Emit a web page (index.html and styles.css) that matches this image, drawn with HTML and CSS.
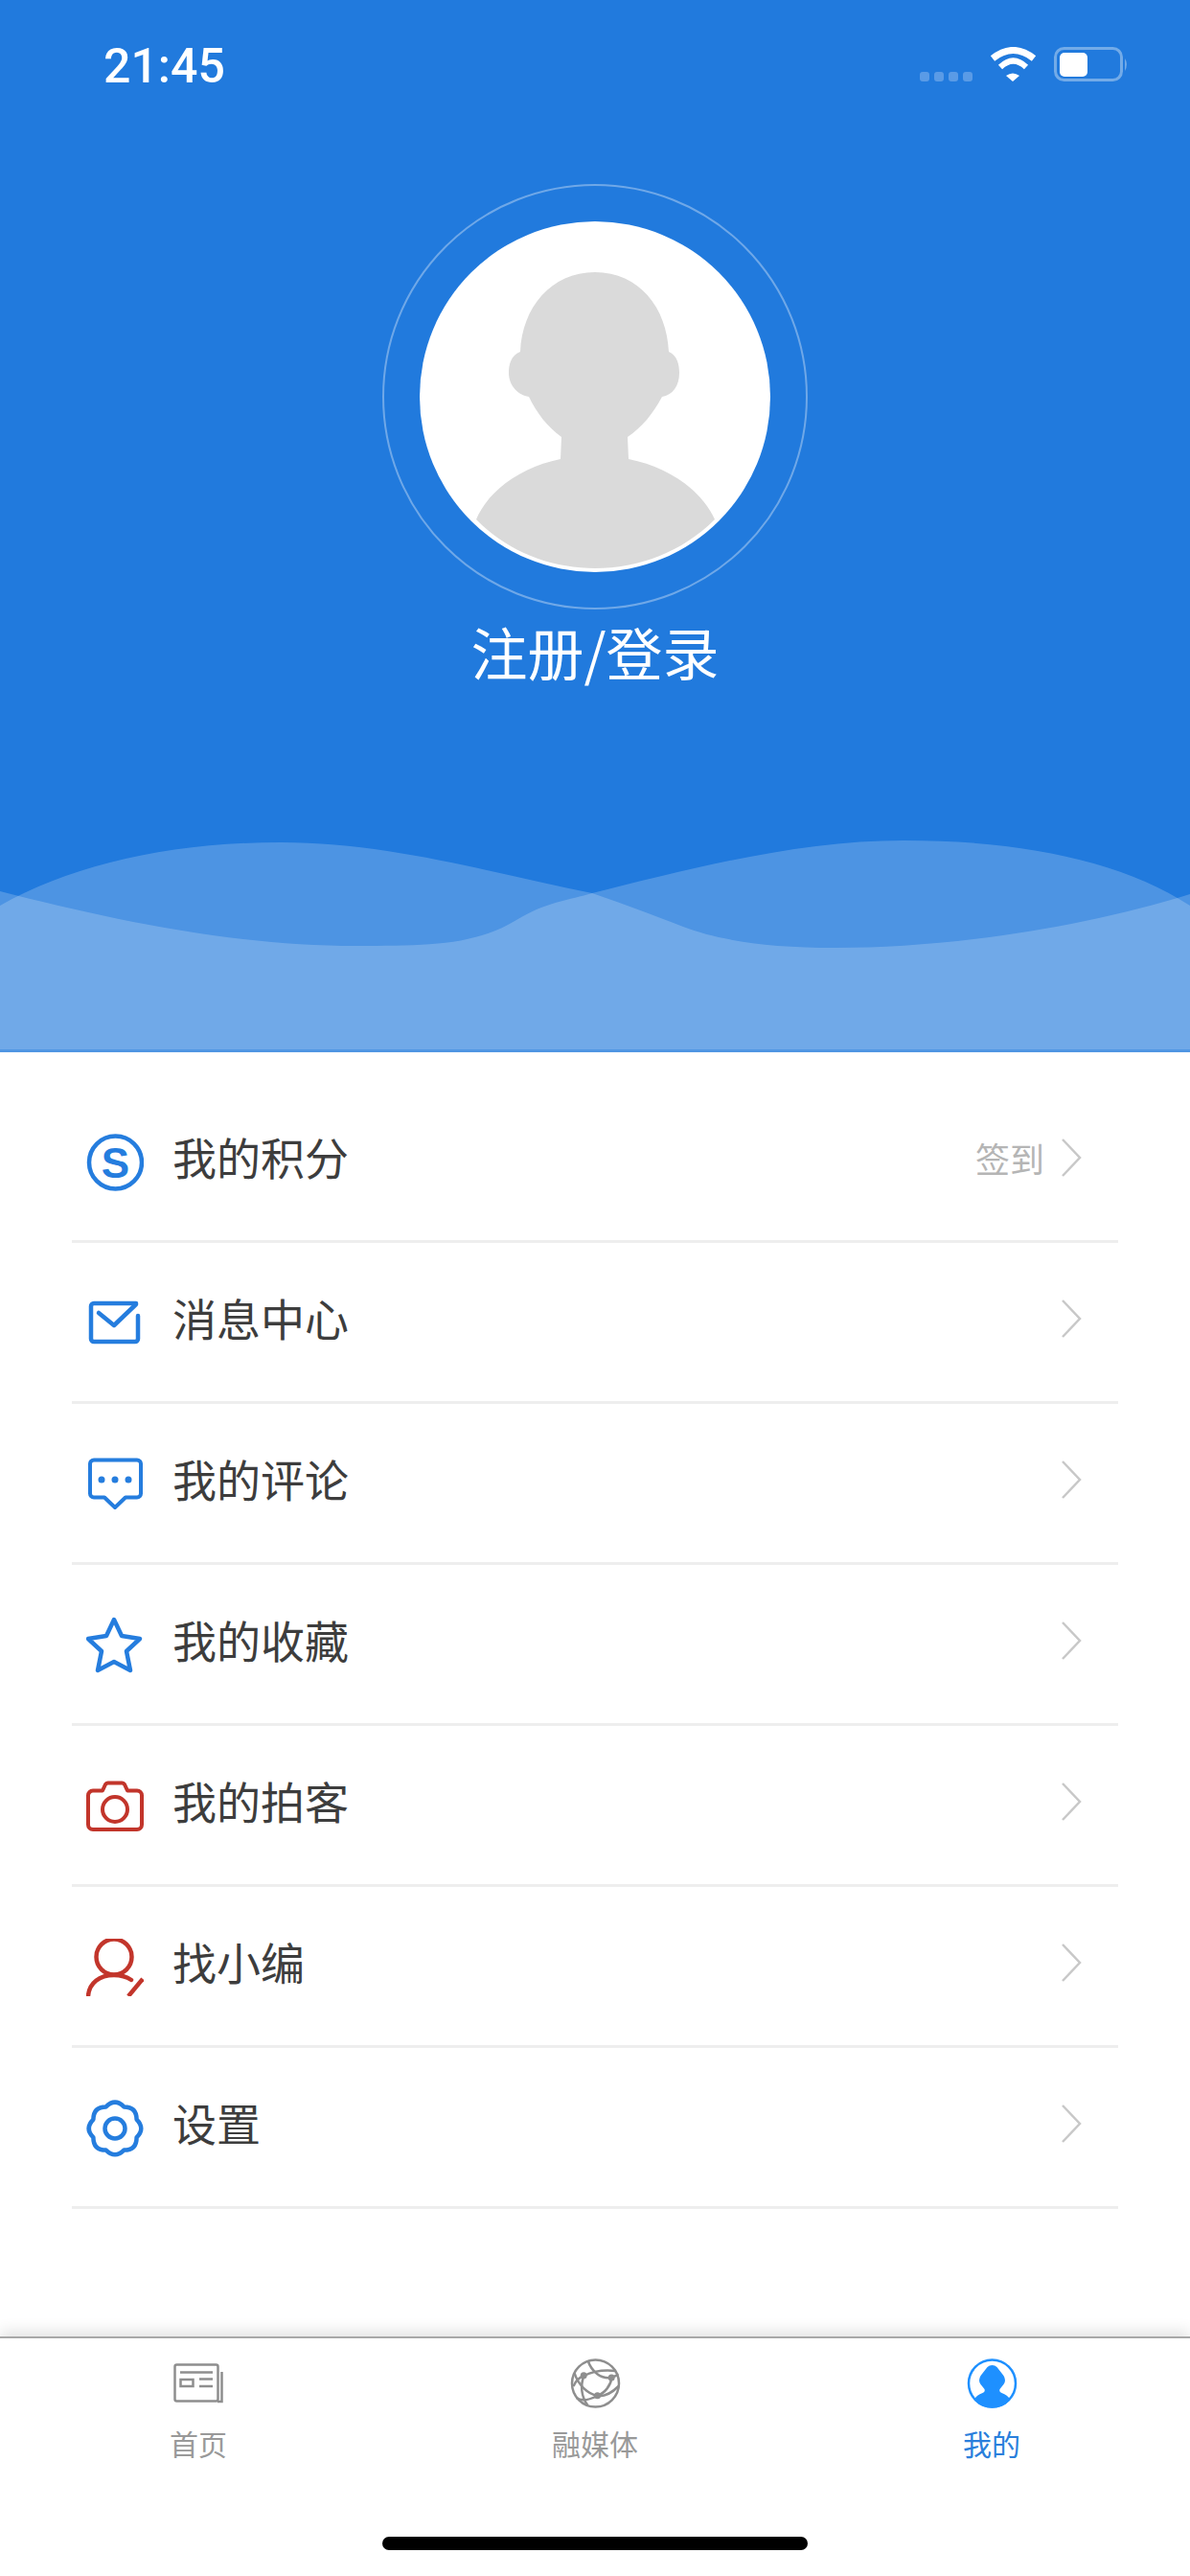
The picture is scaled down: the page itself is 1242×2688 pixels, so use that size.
FILE: index.html
```html
<!DOCTYPE html>
<html>
<head>
  <meta charset="utf-8">
  <title>我的</title>
  <link rel="stylesheet" href="styles.css">
</head>
<body>
  <div class="hero">
    <svg class="waves" viewBox="0 0 1242 230" preserveAspectRatio="none">
      <path class="wave" d="M0 77C75 35 175 11 293 11C410 11 520 45 618 64C715 40 830 9 943 9C1065 9 1170 30 1242 77V230H0Z"/>
      <path class="wave" d="M0 62C110 90 240 119 372 119C445 119 495 119 539 92C570 73 595 71 618 64C650 75 685 88 713 99C750 113 800 121 872 121C990 121 1130 100 1242 65V230H0Z"/>
      <rect class="wave-edge" x="0" y="227" width="1242" height="3"/>
    </svg>

    <div class="status">
      <span class="time">21:45</span>
      <svg class="status-icons" width="219" height="36" viewBox="0 0 219 36">
        <g fill="#5a9be6">
          <rect x="0" y="26" width="10" height="10" rx="3"/>
          <rect x="15" y="26" width="10" height="10" rx="3"/>
          <rect x="30" y="26" width="10" height="10" rx="3"/>
          <rect x="45" y="26" width="10" height="10" rx="3"/>
        </g>
        <g fill="none" stroke="#fff">
          <path stroke-width="7" d="M76 12Q97.5 -5 119 12"/>
          <path stroke-width="6" d="M84 21Q97.5 8 111 21"/>
        </g>
        <path fill="#fff" d="M90 30Q97 25 104 30L97 36Z"/>
        <rect x="141.5" y="1.5" width="69" height="33" rx="9" fill="none" stroke="#73abe8" stroke-width="3"/>
        <rect x="146" y="6" width="29" height="25" rx="5" fill="#fff"/>
        <path fill="#73abe8" d="M214 12Q218 18 214 25Z"/>
      </svg>
    </div>

    <div class="ring">
      <div class="avatar">
        <svg width="366" height="366" viewBox="438 230 366 366">
          <path fill="#dadada" d="M621 283C575 283 545 320 543 366C533 370 531 380 531 388C531 402 541 411 552 413C560 430 572 445 586 455L585 478C545 486 510 510 497 541C530 575 575 592 621 592C667 592 712 575 746 541C732 510 697 486 656 478L655 455C670 445 682 430 691 413C702 411 709 402 709 388C709 380 707 370 698 366C696 320 667 283 621 283Z"/>
        </svg>
      </div>
    </div>
    <div class="login">注册/登录</div>
  </div>

  <div class="menu">
    <div class="row">
      <svg class="icon" viewBox="0 0 60 60">
        <circle class="ln" cx="30.5" cy="30" r="27.5"/>
        <text class="s-mark" x="30.5" y="46">S</text>
      </svg>
      <span class="label">我的积分</span>
      <span class="extra">签到</span>
      <svg class="arrow" viewBox="0 0 22 40"><path d="M2 1L20 20L2 39"/></svg>
    </div>
    <div class="row">
      <svg class="icon" viewBox="0 0 60 60">
        <path class="ln" stroke-linecap="round" d="M52 9H8A3 3 0 0 0 5 12V46A3 3 0 0 0 8 49H51A3 3 0 0 0 54 46V22"/>
        <path class="ln" stroke-linecap="round" stroke-linejoin="round" d="M13 19L29 32L52 10"/>
      </svg>
      <span class="label">消息中心</span>
      <svg class="arrow" viewBox="0 0 22 40"><path d="M2 1L20 20L2 39"/></svg>
    </div>
    <div class="row">
      <svg class="icon" viewBox="0 0 60 60">
        <path class="ln thin" stroke-linejoin="round" d="M8 4.5H53A4 4 0 0 1 57 8.5V39.5A4 4 0 0 1 53 43.5H41L30 54L19 43.5H8A4 4 0 0 1 4 39.5V8.5A4 4 0 0 1 8 4.5Z"/>
        <circle class="dot" cx="16" cy="25" r="3.5"/>
        <circle class="dot" cx="30" cy="25" r="3.5"/>
        <circle class="dot" cx="44" cy="25" r="3.5"/>
      </svg>
      <span class="label">我的评论</span>
      <svg class="arrow" viewBox="0 0 22 40"><path d="M2 1L20 20L2 39"/></svg>
    </div>
    <div class="row">
      <svg class="icon" viewBox="0 0 60 60">
        <path class="ln" stroke-linejoin="round" d="M29 3L37 20L56 23L42 36L46 56L29 47L12 56L16 36L2 23L21 20Z"/>
      </svg>
      <span class="label">我的收藏</span>
      <svg class="arrow" viewBox="0 0 22 40"><path d="M2 1L20 20L2 39"/></svg>
    </div>
    <div class="row">
      <svg class="icon" viewBox="0 0 60 60">
        <path class="ln red thin" stroke-linejoin="round" d="M7 13.5H17L20 7A3 3 0 0 1 23 5.5H37A3 3 0 0 1 40 7L43 13.5H53A5 5 0 0 1 58 18.5V49A5 5 0 0 1 53 54H7A5 5 0 0 1 2 49V18.5A5 5 0 0 1 7 13.5Z"/>
        <circle class="ln red thin" cx="30" cy="33" r="13"/>
      </svg>
      <span class="label">我的拍客</span>
      <svg class="arrow" viewBox="0 0 22 40"><path d="M2 1L20 20L2 39"/></svg>
    </div>
    <div class="row">
      <svg class="icon" viewBox="0 0 60 60">
        <circle class="ln red" cx="29" cy="19" r="18.5"/>
        <path class="ln red" stroke-linecap="round" d="M2 60C3 46 14 38 29 38C35 38 41 39 47 43"/>
        <path class="ln red" d="M59 42L44 60"/>
      </svg>
      <span class="label">找小编</span>
      <svg class="arrow" viewBox="0 0 22 40"><path d="M2 1L20 20L2 39"/></svg>
    </div>
    <div class="row">
      <svg class="icon" viewBox="0 0 60 60">
        <path class="ln" stroke-linejoin="round" d="M39.4 7.4Q52.6 7.4 52.6 20.6Q62 30 52.6 39.4Q52.6 52.6 39.4 52.6Q30 62 20.6 52.6Q7.4 52.6 7.4 39.4Q-2 30 7.4 20.6Q7.4 7.4 20.6 7.4Q30 -2 39.4 7.4Z"/>
        <circle class="ln" cx="30" cy="30" r="10.5"/>
      </svg>
      <span class="label">设置</span>
      <svg class="arrow" viewBox="0 0 22 40"><path d="M2 1L20 20L2 39"/></svg>
    </div>
  </div>

  <div class="tabbar">
    <div class="tabs">
      <div class="tab">
        <svg class="tab-icon" viewBox="0 -5 53 52">
          <rect x="1.5" y="1.5" width="45" height="38" rx="2"/>
          <path d="M7 9.5H41M27 16.5H41M27 24H41M50.5 9V40H46"/>
          <rect x="7.5" y="17" width="13" height="7"/>
        </svg>
        <span>首页</span>
      </div>
      <div class="tab">
        <svg class="tab-icon" viewBox="-26.5 -26 53 52">
          <circle cx="0" cy="0" r="24.5"/>
          <path d="M-8 -24C-4 -12 6 -4 17 -6C20 -7 22 -9 24 -9"/>
          <path d="M-23 3C-20 -4 -15 -7 -12 -8C0 -14 12 -14 21 -13"/>
          <path d="M-22 -11C-18 2 -8 11 2 13C10 14 18 9 24 3"/>
          <path d="M-12 -8C-16 2 -15 14 -8 23"/>
          <path d="M17 -6C16 2 10 10 2 13C-6 17 -15 19 -20 15"/>
          <circle class="node" cx="-12.3" cy="-8.3" r="3.5"/>
          <circle class="node" cx="16.7" cy="-6" r="3.5"/>
          <circle class="node" cx="2" cy="12.7" r="3.5"/>
        </svg>
        <span>融媒体</span>
      </div>
      <div class="tab on">
        <svg class="tab-icon" viewBox="-26.5 -26 53 52">
          <circle cx="0" cy="0" r="24.5"/>
          <path class="person" d="M0 -19Q3 -19 5 -17L12 -8Q15 -3 12 1L8 6Q7 9 10 10Q16 12 19 17A25 25 0 0 1 -19 17Q-16 12 -10 10Q-7 9 -8 6L-12 1Q-15 -3 -12 -8L-5 -17Q-3 -19 0 -19Z"/>
        </svg>
        <span>我的</span>
      </div>
    </div>
    <div class="home-bar"></div>
  </div>
</body>
</html>
```
FILE: styles.css
```css
body {
  margin: 0;
  width: 1242px;
  height: 2688px;
  display: flex;
  flex-direction: column;
  overflow: hidden;
  background: #fff;
  font-family: "Noto Sans CJK SC", "Liberation Sans", sans-serif;
}

.hero {
  position: relative;
  height: 1098px;
  flex: none;
  background: #217add;
  display: flex;
  flex-direction: column;
  align-items: center;
}

.waves {
  position: absolute;
  left: 0;
  bottom: 0;
  width: 1242px;
  height: 230px;
}

.wave {
  fill: rgba(255, 255, 255, 0.2);
}

.wave-edge {
  fill: #5096e3;
}

.status {
  align-self: stretch;
  height: 144px;
  box-sizing: border-box;
  padding: 49px 63px 0 108px;
  display: flex;
  justify-content: space-between;
  align-items: flex-start;
}

.time {
  margin-top: -5px;
  color: #fff;
  font: 500 50px/50px Roboto, "Liberation Sans", sans-serif;
}

.ring {
  width: 444px;
  height: 444px;
  flex: none;
  margin-top: 48px;
  box-sizing: border-box;
  border: 2px solid #6fa8e8;
  border-radius: 50%;
  display: flex;
  align-items: center;
  justify-content: center;
}

.avatar {
  width: 366px;
  height: 366px;
  border-radius: 50%;
  background: #fff;
  overflow: hidden;
}

.avatar svg {
  display: block;
}

.login {
  margin-top: 2px;
  color: #fff;
  font-size: 59px;
  line-height: 84px;
}

.menu {
  flex: 1;
  padding: 31px 75px 0 75px;
}

.row {
  height: 168px;
  box-sizing: border-box;
  border-bottom: 3px solid #eee;
  display: flex;
  align-items: center;
  padding: 0 38px 0 15px;
}

.icon {
  width: 60px;
  height: 60px;
  flex: none;
  margin: 3px 30px 0 0;
}

.ln {
  fill: none;
  stroke: #257dde;
  stroke-width: 4.5;
}

.thin {
  stroke-width: 4;
}

.red {
  stroke: #c2352b;
}

.dot {
  fill: #257dde;
}

.s-mark {
  fill: #257dde;
  text-anchor: middle;
  font: 700 44px "Liberation Sans", sans-serif;
}

.label {
  flex: 1;
  margin-top: -11px;
  color: #3d3d3d;
  font-size: 46px;
  line-height: 60px;
}

.extra {
  margin: -7px 17px 0 0;
  color: #b5b5b5;
  font-size: 36px;
  line-height: 50px;
}

.arrow {
  width: 22px;
  height: 40px;
  flex: none;
  margin-top: -7px;
}

.arrow path {
  fill: none;
  stroke: #c8c8c8;
  stroke-width: 2.5;
}

.tabbar {
  height: 250px;
  flex: none;
  box-sizing: border-box;
  border-top: 2px solid #a8a8a8;
  background: #fff;
  box-shadow: 0 -6px 14px rgba(0, 0, 0, 0.11);
  display: flex;
  flex-direction: column;
  align-items: center;
}

.tabs {
  align-self: stretch;
  display: grid;
  grid-template-columns: repeat(3, 1fr);
  padding-top: 21px;
}

.tab {
  display: flex;
  flex-direction: column;
  align-items: center;
  gap: 16px;
  color: #999;
  font-size: 30px;
  line-height: 40px;
}

.tab.on {
  color: #2a7fdc;
}

.tab-icon {
  width: 53px;
  height: 52px;
  fill: none;
  stroke: #8e8e8e;
  stroke-width: 2.5;
}

.tab.on .tab-icon {
  stroke: #1e90ff;
}

.node {
  fill: #8e8e8e;
  stroke: none;
}

.person {
  fill: #1e90ff;
  stroke: none;
}

.home-bar {
  width: 444px;
  height: 14px;
  margin-top: 78px;
  border-radius: 7px;
  background: #000;
}
```
